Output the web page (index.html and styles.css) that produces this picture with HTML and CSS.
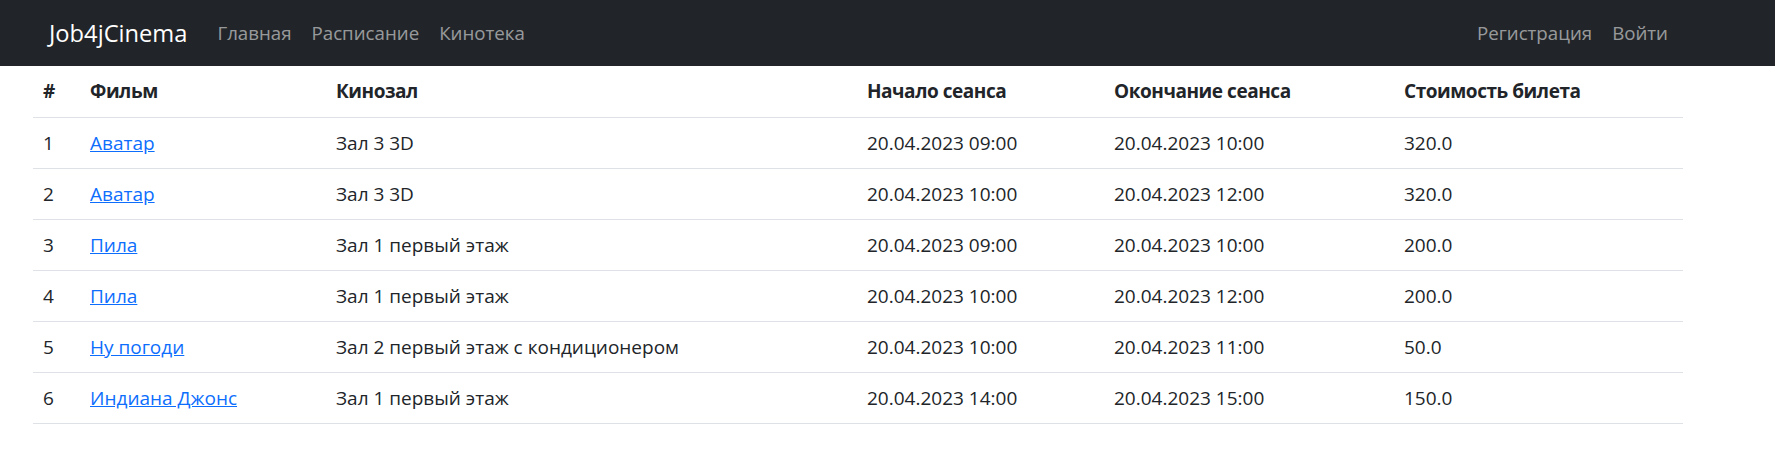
FILE: index.html
```html
<!DOCTYPE html>
<html lang="ru">
<head>
<meta charset="utf-8">
<title>Job4jCinema</title>
<link rel="stylesheet" href="styles.css">
</head>
<body>
<nav class="navbar">
  <div class="nav-left">
    <a class="brand" href="#">Job4jCinema</a>
    <a class="nav-link" href="#">Главная</a>
    <a class="nav-link" href="#">Расписание</a>
    <a class="nav-link" href="#">Кинотека</a>
  </div>
  <div class="nav-right">
    <a class="nav-link" href="#">Регистрация</a>
    <a class="nav-link" href="#">Войти</a>
  </div>
</nav>
<main class="content">
  <table class="table">
    <colgroup>
      <col class="c-num"><col class="c-film"><col class="c-hall"><col class="c-start"><col class="c-end"><col class="c-price">
    </colgroup>
    <thead>
      <tr><th>#</th><th>Фильм</th><th>Кинозал</th><th>Начало сеанса</th><th>Окончание сеанса</th><th>Стоимость билета</th></tr>
    </thead>
    <tbody>
      <tr><td>1</td><td><a href="#">Аватар</a></td><td>Зал 3 3D</td><td>20.04.2023 09:00</td><td>20.04.2023 10:00</td><td>320.0</td></tr>
      <tr><td>2</td><td><a href="#">Аватар</a></td><td>Зал 3 3D</td><td>20.04.2023 10:00</td><td>20.04.2023 12:00</td><td>320.0</td></tr>
      <tr><td>3</td><td><a href="#">Пила</a></td><td>Зал 1 первый этаж</td><td>20.04.2023 09:00</td><td>20.04.2023 10:00</td><td>200.0</td></tr>
      <tr><td>4</td><td><a href="#">Пила</a></td><td>Зал 1 первый этаж</td><td>20.04.2023 10:00</td><td>20.04.2023 12:00</td><td>200.0</td></tr>
      <tr><td>5</td><td><a href="#">Ну погоди</a></td><td>Зал 2 первый этаж с кондиционером</td><td>20.04.2023 10:00</td><td>20.04.2023 11:00</td><td>50.0</td></tr>
      <tr><td>6</td><td><a href="#">Индиана Джонс</a></td><td>Зал 1 первый этаж</td><td>20.04.2023 14:00</td><td>20.04.2023 15:00</td><td>150.0</td></tr>
    </tbody>
  </table>
</main>
</body>
</html>
```
FILE: styles.css
```css
* { box-sizing: border-box; }
html, body { margin: 0; padding: 0; }
body {
  font-family: "Open Sans", "Noto Sans", sans-serif;
  font-size: 19px;
  color: #212529;
  background: #fff;
}
.navbar {
  height: 66px;
  background: #212529;
  display: flex;
  align-items: center;
  justify-content: space-between;
  padding: 0 97px 0 49px;
}
.nav-left, .nav-right {
  display: flex;
  align-items: center;
}
.brand {
  color: #fff;
  text-decoration: none;
  font-size: 23.7px;
  margin-right: 20px;
}
.nav-link {
  color: rgba(255,255,255,0.55);
  text-decoration: none;
  padding: 0 10px;
  line-height: 30px;
  font-size: 18.7px;
}
.content {
  padding: 0 33px;
}
.table {
  width: 1650px;
  border-collapse: collapse;
}
.c-num { width: 47px; }
.c-film { width: 246px; }
.c-hall { width: 531px; }
.c-start { width: 247px; }
.c-end { width: 290px; }
.c-price { width: 289px; }
.table th, .table td {
  text-align: left;
  padding: 0 10px;
  height: 51px;
  border-bottom: 1px solid #dee2e6;
  vertical-align: middle;
  white-space: nowrap;
}
.table th { font-weight: 700; letter-spacing: -0.45px; }
.table a { color: #0d6efd; text-decoration: underline; }
```
